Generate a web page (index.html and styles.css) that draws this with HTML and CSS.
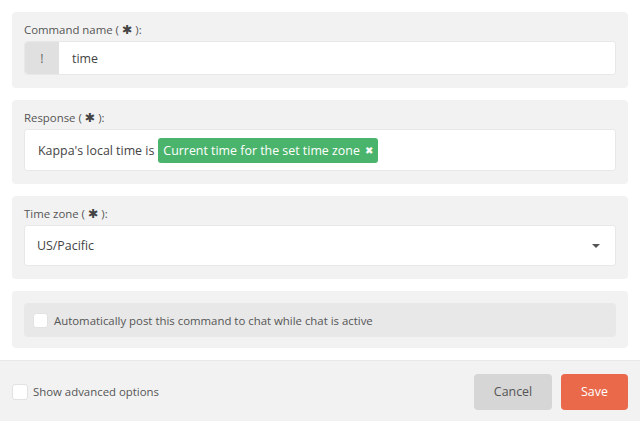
FILE: index.html
```html
<!DOCTYPE html>
<html lang="en">
    <head>
        <meta charset="utf-8">
        <link rel="stylesheet" href="styles.css">
    </head>
    <body>
        <div class="form">
            <div class="field">
                <div class="label">Command name ( <span class="req">&#10033;</span> ):</div>
                <div class="input cmd">
                    <span class="prefix">!</span>
                    <span class="value">time</span>
                </div>
            </div>
            <div class="field">
                <div class="label">Response ( <span class="req">&#10033;</span> ):</div>
                <div class="input resp">
                    <span class="value">Kappa's local time is</span>
                    <span class="tag">Current time for the set time zone <b>&#10006;</b></span>
                </div>
            </div>
            <div class="field">
                <div class="label">Time zone ( <span class="req">&#10033;</span> ):</div>
                <div class="input select">
                    <span class="value">US/Pacific</span>
                    <span class="caret"></span>
                </div>
            </div>
            <div class="field last">
                <div class="check-row">
                    <span class="box"></span>
                    <span>Automatically post this command to chat while chat is active</span>
                </div>
            </div>
        </div>
        <div class="footer">
            <div class="adv">
                <span class="box"></span>
                <span>Show advanced options</span>
            </div>
            <div class="btns">
                <span class="btn cancel">Cancel</span>
                <span class="btn save">Save</span>
            </div>
        </div>
    </body>
</html>
```

FILE: styles.css
```css
*{
    margin: 0;
    padding: 0;
    box-sizing: border-box;
}
body{
    font-family: "Open Sans", "Noto Sans", sans-serif;
    background: #fff;
    color: #555;
    width: 640px;
    height: 421px;
    overflow: hidden;
}
.form{
    padding: 12px 12px 0;
}
.field{
    background: #f2f2f2;
    border-radius: 4px;
    padding: 10px 12px 13px;
    margin-bottom: 12px;
}
.field.last{
    padding: 12px 12px 11px;
}
.label{
    font-size: 11.4px;
    line-height: 16px;
    margin-bottom: 3px;
    color: #555;
}
.req{
    font-family: "DejaVu Sans", sans-serif;
    font-size: 12.5px;
    line-height: 14px;
    color: #444;
}
.input{
    background: #fff;
    border: 1px solid #e8e8e8;
    border-radius: 3px;
    display: flex;
    align-items: center;
    font-size: 12.4px;
    color: #444;
}
.cmd{
    height: 34px;
}
.prefix{
    width: 34px;
    align-self: stretch;
    background: #e0e0e0;
    display: flex;
    align-items: center;
    justify-content: center;
    border-radius: 3px 0 0 3px;
    color: #666;
}
.cmd .value{
    padding-left: 13px;
}
.resp{
    height: 42px;
    padding-left: 13px;
}
.tag{
    display: inline-flex;
    align-items: center;
    height: 25px;
    margin-left: 4px;
    padding: 0 5px 0 5px;
    background: #4bb46c;
    color: #fff;
    border-radius: 3px;
}
.tag b{
    font-family: "DejaVu Sans", sans-serif;
    font-size: 10px;
    margin-left: 5px;
}
.select{
    height: 41px;
    padding: 0 13px 0 12px;
    justify-content: space-between;
}
.caret{
    width: 0;
    height: 0;
    border-left: 4px solid transparent;
    border-right: 4px solid transparent;
    border-top: 4px solid #555;
    margin-right: 2px;
}
.check-row{
    background: #e8e8e8;
    border-radius: 4px;
    height: 34px;
    display: flex;
    align-items: center;
    padding-left: 9px;
    font-size: 11.4px;
    color: #555;
}
.box{
    width: 15px;
    height: 15px;
    background: #fff;
    border: 1px solid #e2e2e2;
    border-radius: 3px;
    margin-right: 6px;
    flex: none;
}
.footer{
    border-top: 1px solid #e8e8e8;
    background: #f2f2f2;
    height: 62px;
    display: flex;
    align-items: center;
    justify-content: space-between;
    padding: 0 12px;
}
.adv{
    display: flex;
    align-items: center;
    font-size: 11.4px;
    color: #555;
}
.adv .box{
    width: 16px;
    height: 16px;
    margin-right: 5px;
}
.btns{
    display: flex;
    gap: 9px;
}
.btn{
    height: 36px;
    border-radius: 4px;
    display: flex;
    align-items: center;
    justify-content: center;
    font-size: 12.4px;
}
.cancel{
    width: 78px;
    background: #d6d6d6;
    color: #555;
}
.save{
    width: 67px;
    background: #e9694a;
    color: #fff;
}
```
